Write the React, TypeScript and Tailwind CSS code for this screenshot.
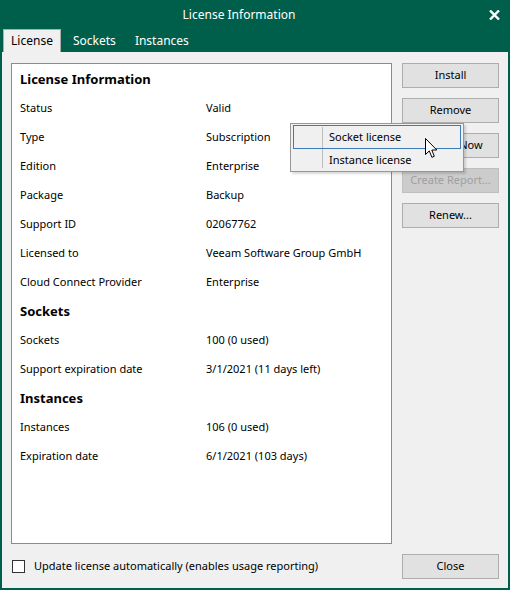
import React from 'react';

const licenseRows: [string, string][] = [
  ['Status', 'Valid'],
  ['Type', 'Subscription'],
  ['Edition', 'Enterprise'],
  ['Package', 'Backup'],
  ['Support ID', '02067762'],
  ['Licensed to', 'Veeam Software Group GmbH'],
  ['Cloud Connect Provider', 'Enterprise'],
];

const socketRows: [string, string][] = [
  ['Sockets', '100 (0 used)'],
  ['Support expiration date', '3/1/2021 (11 days left)'],
];

const instanceRows: [string, string][] = [
  ['Instances', '106 (0 used)'],
  ['Expiration date', '6/1/2021 (103 days)'],
];

function Header({ title }: { title: string }) {
  return <div className="h-[29px] flex items-center text-[13px] font-bold">{title}</div>;
}

function Row({ label, value }: { label: string; value: string }) {
  return (
    <div className="h-[29px] grid grid-cols-[186px_1fr] items-center">
      <span>{label}</span>
      <span>{value}</span>
    </div>
  );
}

function Btn({ children, disabled }: { children: React.ReactNode; disabled?: boolean }) {
  return (
    <button
      className={
        disabled
          ? 'h-[25px] w-[97px] border border-[#bfbfbf] bg-[#cccccc] text-[#a0a0a0]'
          : 'h-[25px] w-[97px] border border-[#adadad] bg-[#e1e1e1] text-black'
      }
    >
      {children}
    </button>
  );
}

export default function App() {
  return (
    <div className="relative w-[510px] h-[590px] bg-[#005f4b] flex flex-col font-['Noto_Sans',sans-serif] text-[11px] text-black">
      {/* title bar */}
      <div className="h-[29px] flex items-center">
        <div className="flex-1 flex justify-center text-white text-[12px]">License Information</div>
        <div className="w-[32px] flex justify-center">
          <svg width="11" height="10" viewBox="0 0 11 10">
            <path d="M1 0.5 L10 9.5 M10 0.5 L1 9.5" stroke="#fff" strokeWidth="2.4" />
          </svg>
        </div>
      </div>

      {/* tabs */}
      <div className="h-[23px] flex pl-[3px] text-[12px]">
        <div className="w-[58px] h-[23px] bg-[#f0f0f0] border border-b-0 border-[#acacac] flex items-center justify-center">
          License
        </div>
        <div className="pl-[12px] pr-[10px] flex items-center text-white">Sockets</div>
        <div className="pl-[9px] flex items-center text-white">Instances</div>
      </div>

      {/* body */}
      <div className="flex-1 mx-[2px] mb-[2px] bg-[#f0f0f0] flex flex-col">
        <div className="flex pt-[11px] pl-[9px] pr-[9px]">
          <div className="w-[381px] h-[481px] bg-white border border-[#8c8c8c] pt-[1px] px-[8px]">
            <Header title="License Information" />
            {licenseRows.map(([l, v]) => (
              <Row key={l} label={l} value={v} />
            ))}
            <Header title="Sockets" />
            {socketRows.map(([l, v]) => (
              <Row key={l} label={l} value={v} />
            ))}
            <Header title="Instances" />
            {instanceRows.map(([l, v]) => (
              <Row key={l} label={l} value={v} />
            ))}
          </div>
          <div className="ml-[10px] flex flex-col gap-[10px]">
            <Btn>Install</Btn>
            <Btn>Remove</Btn>
            <Btn>Update Now</Btn>
            <Btn disabled>Create Report...</Btn>
            <Btn>Renew...</Btn>
          </div>
        </div>

        <div className="flex items-center mt-[10px] pl-[10px] pr-[9px]">
          <div className="w-[13px] h-[13px] border border-[#333333] bg-white" />
          <span className="ml-[9px] flex-1">Update license automatically (enables usage reporting)</span>
          <Btn>Close</Btn>
        </div>
      </div>

      {/* context menu */}
      <div className="absolute left-[290px] top-[123px] w-[174px] h-[49px] bg-[#f0f0f0] border border-[#979797] pt-[1px] px-[2px] flex flex-col shadow-[2px_2px_2px_rgba(0,0,0,0.15)]">
        <div className="absolute left-[31px] top-[3px] bottom-[3px] w-px bg-[#bdbdbd]" />
        <div className="relative h-[24px] border border-[#3d7ab6] flex items-center pl-[35px]">Socket license</div>
        <div className="relative h-[22px] flex items-center pl-[36px]">Instance license</div>
      </div>

      {/* mouse pointer */}
      <svg className="absolute left-[425px] top-[138px]" width="13" height="21" viewBox="0 0 13 21">
        <path
          d="M0.5 0.5 L0.5 16.5 L4.3 12.9 L6.9 19.3 L9.3 18.3 L6.8 12 L11.8 12 Z"
          fill="#fff"
          stroke="#000"
          strokeWidth="1"
          strokeLinejoin="miter"
        />
      </svg>
    </div>
  );
}
